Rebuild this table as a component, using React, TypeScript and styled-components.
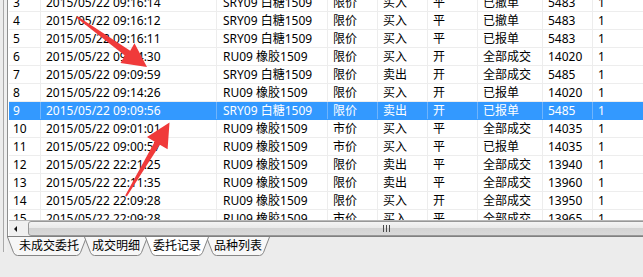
import styled, { createGlobalStyle } from "styled-components";

const GlobalStyle = createGlobalStyle`
  html, body { margin: 0; padding: 0; background: #ececec; }
  body { font-family: "Noto Sans", "Noto Sans CJK SC", sans-serif; }
`;

const Page = styled.div`
  position: relative;
  width: 643px;
  height: 277px;
  overflow: hidden;
  box-sizing: border-box;
  padding-left: 3px;
  background: #ececec;
`;

const Frame = styled.div`
  display: flex;
  flex-direction: column;
  height: 252px;
  border-left: 1px solid #a9a9a9;
  padding-left: 3px;
  background: #efefef;
`;

const GridBox = styled.div`
  display: flex;
  flex-direction: column;
  height: 238px;
  border-left: 1px solid #8e8f8f;
  padding-left: 1px;
  background: #fff;
`;

const Grid = styled.div`
  height: 220px;
  overflow: hidden;
`;

const Table = styled.div`
  margin-top: -6px;
`;

const Row = styled.div<{ $sel?: boolean }>`
  display: flex;
  height: 18px;
  box-sizing: border-box;
  border-bottom: 1px solid ${(p) => (p.$sel ? "#3399ff" : "#ededed")};
  background: ${(p) => (p.$sel ? "#3399ff" : "#fff")};
  color: ${(p) => (p.$sel ? "#fff" : "#000")};
`;

const Cell = styled.div<{ $w: number; $pad: number; $sel?: boolean }>`
  flex: none;
  width: ${(p) => p.$w}px;
  box-sizing: border-box;
  padding-left: ${(p) => p.$pad}px;
  border-right: 1px solid ${(p) => (p.$sel ? "#70b4fb" : "#ededed")};
  font-size: 12px;
  line-height: 17px;
  white-space: nowrap;
  overflow: hidden;
`;

const HScroll = styled.div`
  display: flex;
  height: 16px;
  box-sizing: border-box;
  border-top: 1px solid #b9b9b9;
  background: #f0f0f0;
  overflow: hidden;
`;

const ArrowBtn = styled.div`
  flex: none;
  width: 19px;
  display: flex;
  align-items: center;
  justify-content: center;
  &::before {
    content: "";
    border-right: 3px solid #111;
    border-top: 3px solid transparent;
    border-bottom: 3px solid transparent;
    margin-right: 6px;
  }
`;

const Thumb = styled.div`
  flex: none;
  width: 716px;
  box-sizing: border-box;
  border: 1px solid #979797;
  border-radius: 3px;
  background: linear-gradient(to bottom, #f4f4f4 0%, #e9e9e9 45%, #d3d3d3 50%, #d9d9d9 100%);
  display: flex;
  align-items: center;
  justify-content: center;
`;

const Grip = styled.div`
  width: 7px;
  height: 7px;
  background: repeating-linear-gradient(to right, #4a4a4a 0 1px, transparent 1px 3px);
`;

const TabStrip = styled.div`
  display: flex;
  height: 19px;
  border-top: 1px solid #808080;
  background: #ececec;
`;

const TabItem = styled.div<{ $w: number; $first?: boolean; $active?: boolean }>`
  position: relative;
  flex: none;
  width: ${(p) => p.$w}px;
  height: 19px;
  box-sizing: border-box;
  margin-left: ${(p) => (p.$first ? 0 : -3)}px;
  padding-left: ${(p) => (p.$first ? 12 : 8)}px;
  z-index: ${(p) => (p.$active ? 2 : 1)};
  font-size: 12px;
  line-height: 18px;
  color: #000;
`;

const TabShape = styled.svg`
  position: absolute;
  left: 0;
  top: 0;
`;

const TabLabel = styled.span`
  position: relative;
`;

const Overlay = styled.svg`
  position: absolute;
  left: 0;
  top: 0;
  pointer-events: none;
`;

const cols = [
  { w: 32, pad: 4 },
  { w: 176, pad: 5 },
  { w: 111, pad: 6 },
  { w: 50, pad: 5 },
  { w: 50, pad: 5 },
  { w: 50, pad: 5 },
  { w: 65, pad: 5 },
  { w: 50, pad: 5 },
  { w: 60, pad: 5 },
];

const SR = "SRY09 白糖1509";
const RU = "RU09 橡胶1509";

const rows: string[][] = [
  ["3", "2015/05/22 09:16:14", SR, "限价", "买入", "平", "已撤单", "5483", "1"],
  ["4", "2015/05/22 09:16:12", SR, "限价", "买入", "平", "已撤单", "5483", "1"],
  ["5", "2015/05/22 09:16:11", SR, "限价", "买入", "平", "已报单", "5483", "1"],
  ["6", "2015/05/22 09:14:30", RU, "限价", "买入", "开", "全部成交", "14020", "1"],
  ["7", "2015/05/22 09:09:59", SR, "限价", "卖出", "开", "全部成交", "5485", "1"],
  ["8", "2015/05/22 09:14:26", RU, "限价", "买入", "开", "已报单", "14020", "1"],
  ["9", "2015/05/22 09:09:56", SR, "限价", "卖出", "开", "已报单", "5485", "1"],
  ["10", "2015/05/22 09:01:01", RU, "市价", "买入", "平", "全部成交", "14035", "1"],
  ["11", "2015/05/22 09:00:57", RU, "市价", "买入", "平", "已报单", "14035", "1"],
  ["12", "2015/05/22 22:21:25", RU, "限价", "卖出", "平", "全部成交", "13940", "1"],
  ["13", "2015/05/22 22:11:35", RU, "限价", "卖出", "平", "全部成交", "13960", "1"],
  ["14", "2015/05/22 22:09:28", RU, "限价", "买入", "开", "全部成交", "13950", "1"],
  ["15", "2015/05/22 22:09:28", RU, "市价", "买入", "平", "全部成交", "13965", "1"],
];

const tabs = ["未成交委托", "成交明细", "委托记录", "品种列表"];

function Tab({ label, first, active }: { label: string; first?: boolean; active?: boolean }) {
  const w = label.length * 12 + (first ? 20 : 16);
  const d = `M0.5 0 L6.5 15.5 Q7.8 18.5 10.5 18.5 L${w - 10.5} 18.5 Q${w - 7.8} 18.5 ${w - 6.5} 15.5 L${w - 0.5} 0`;
  return (
    <TabItem $w={w} $first={first} $active={active}>
      <TabShape width={w} height={19}>
        <path d={d} fill={active ? "#ffffff" : "#f7f7f7"} stroke="#858585" strokeWidth="1" />
      </TabShape>
      <TabLabel>{label}</TabLabel>
    </TabItem>
  );
}

export default function App() {
  return (
    <>
      <GlobalStyle />
      <Page>
        <Frame>
          <GridBox>
            <Grid>
              <Table>
                {rows.map((r) => {
                  const sel = r[0] === "9";
                  return (
                    <Row key={r[0]} $sel={sel}>
                      {r.map((v, i) => (
                        <Cell key={i} $w={cols[i].w} $pad={cols[i].pad} $sel={sel}>
                          {v}
                        </Cell>
                      ))}
                    </Row>
                  );
                })}
              </Table>
            </Grid>
            <HScroll>
              <ArrowBtn />
              <Thumb>
                <Grip />
              </Thumb>
            </HScroll>
          </GridBox>
          <TabStrip>
            {tabs.map((t, i) => (
              <Tab key={t} label={t} first={i === 0} active={i === 2} />
            ))}
          </TabStrip>
        </Frame>
        <Overlay width={643} height={277}>
          <polygon
            fill="#f03a3a"
            points="77.5,16.3 130.2,50.7 134.5,43.3 147,67 120.5,62.9 124.8,55.5 76.5,17.7"
          />
          <polygon
            fill="#f03a3a"
            points="126.8,196.5 159.9,144.7 167.6,149.3 169.5,122.5 147,137.1 154.7,141.7 125.2,195.5"
          />
        </Overlay>
      </Page>
    </>
  );
}
